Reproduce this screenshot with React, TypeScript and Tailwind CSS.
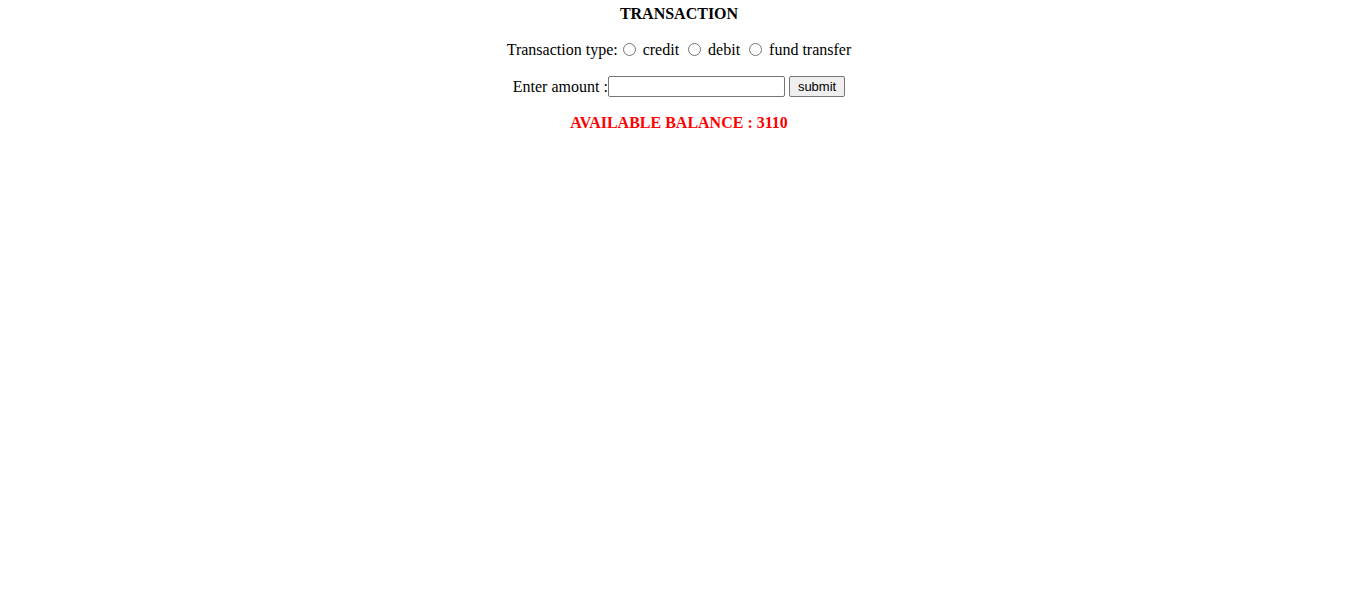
import React from 'react';

export default function App() {
  return (
    <div className="min-h-screen bg-white text-black text-center font-['Liberation_Serif',serif] text-base">
      <form className="flex flex-col items-center pt-[5px] pr-[4px]">
        <h4 className="font-bold leading-[18px]">TRANSACTION</h4>

        <div className="mt-[18px] flex items-center leading-[18px]">
          <span>Transaction type:</span>
          <input type="radio" name="type" className="ml-[5px] mr-[3px] mt-[2px] w-[13px] h-[13px] self-start" />
          <span className="ml-[4px]">credit</span>
          <input type="radio" name="type" className="ml-[9px] mr-[3px] mt-[2px] w-[13px] h-[13px] self-start" />
          <span className="ml-[4px]">debit</span>
          <input type="radio" name="type" className="ml-[9px] mr-[3px] mt-[2px] w-[13px] h-[13px] self-start" />
          <span className="ml-[4px]">fund transfer</span>
        </div>

        <div className="mt-[17px] flex items-center leading-[18px]">
          <span>Enter amount :</span>
          <input
            type="text"
            className="w-[177px] h-[21px] border border-[#767676] rounded-[2px] px-[2px] text-[13px] font-['Liberation_Sans',sans-serif]"
          />
          <button
            type="button"
            className="ml-[4px] h-[21px] px-[8px] bg-[#efefef] border border-[#767676] rounded-[2px] text-[13px] leading-[15px] font-['Liberation_Sans',sans-serif]"
          >
            submit
          </button>
        </div>

        <p className="mt-[17px] font-bold text-[#ff0000] leading-[18px]">AVAILABLE BALANCE : 3110</p>
      </form>
    </div>
  );
}
